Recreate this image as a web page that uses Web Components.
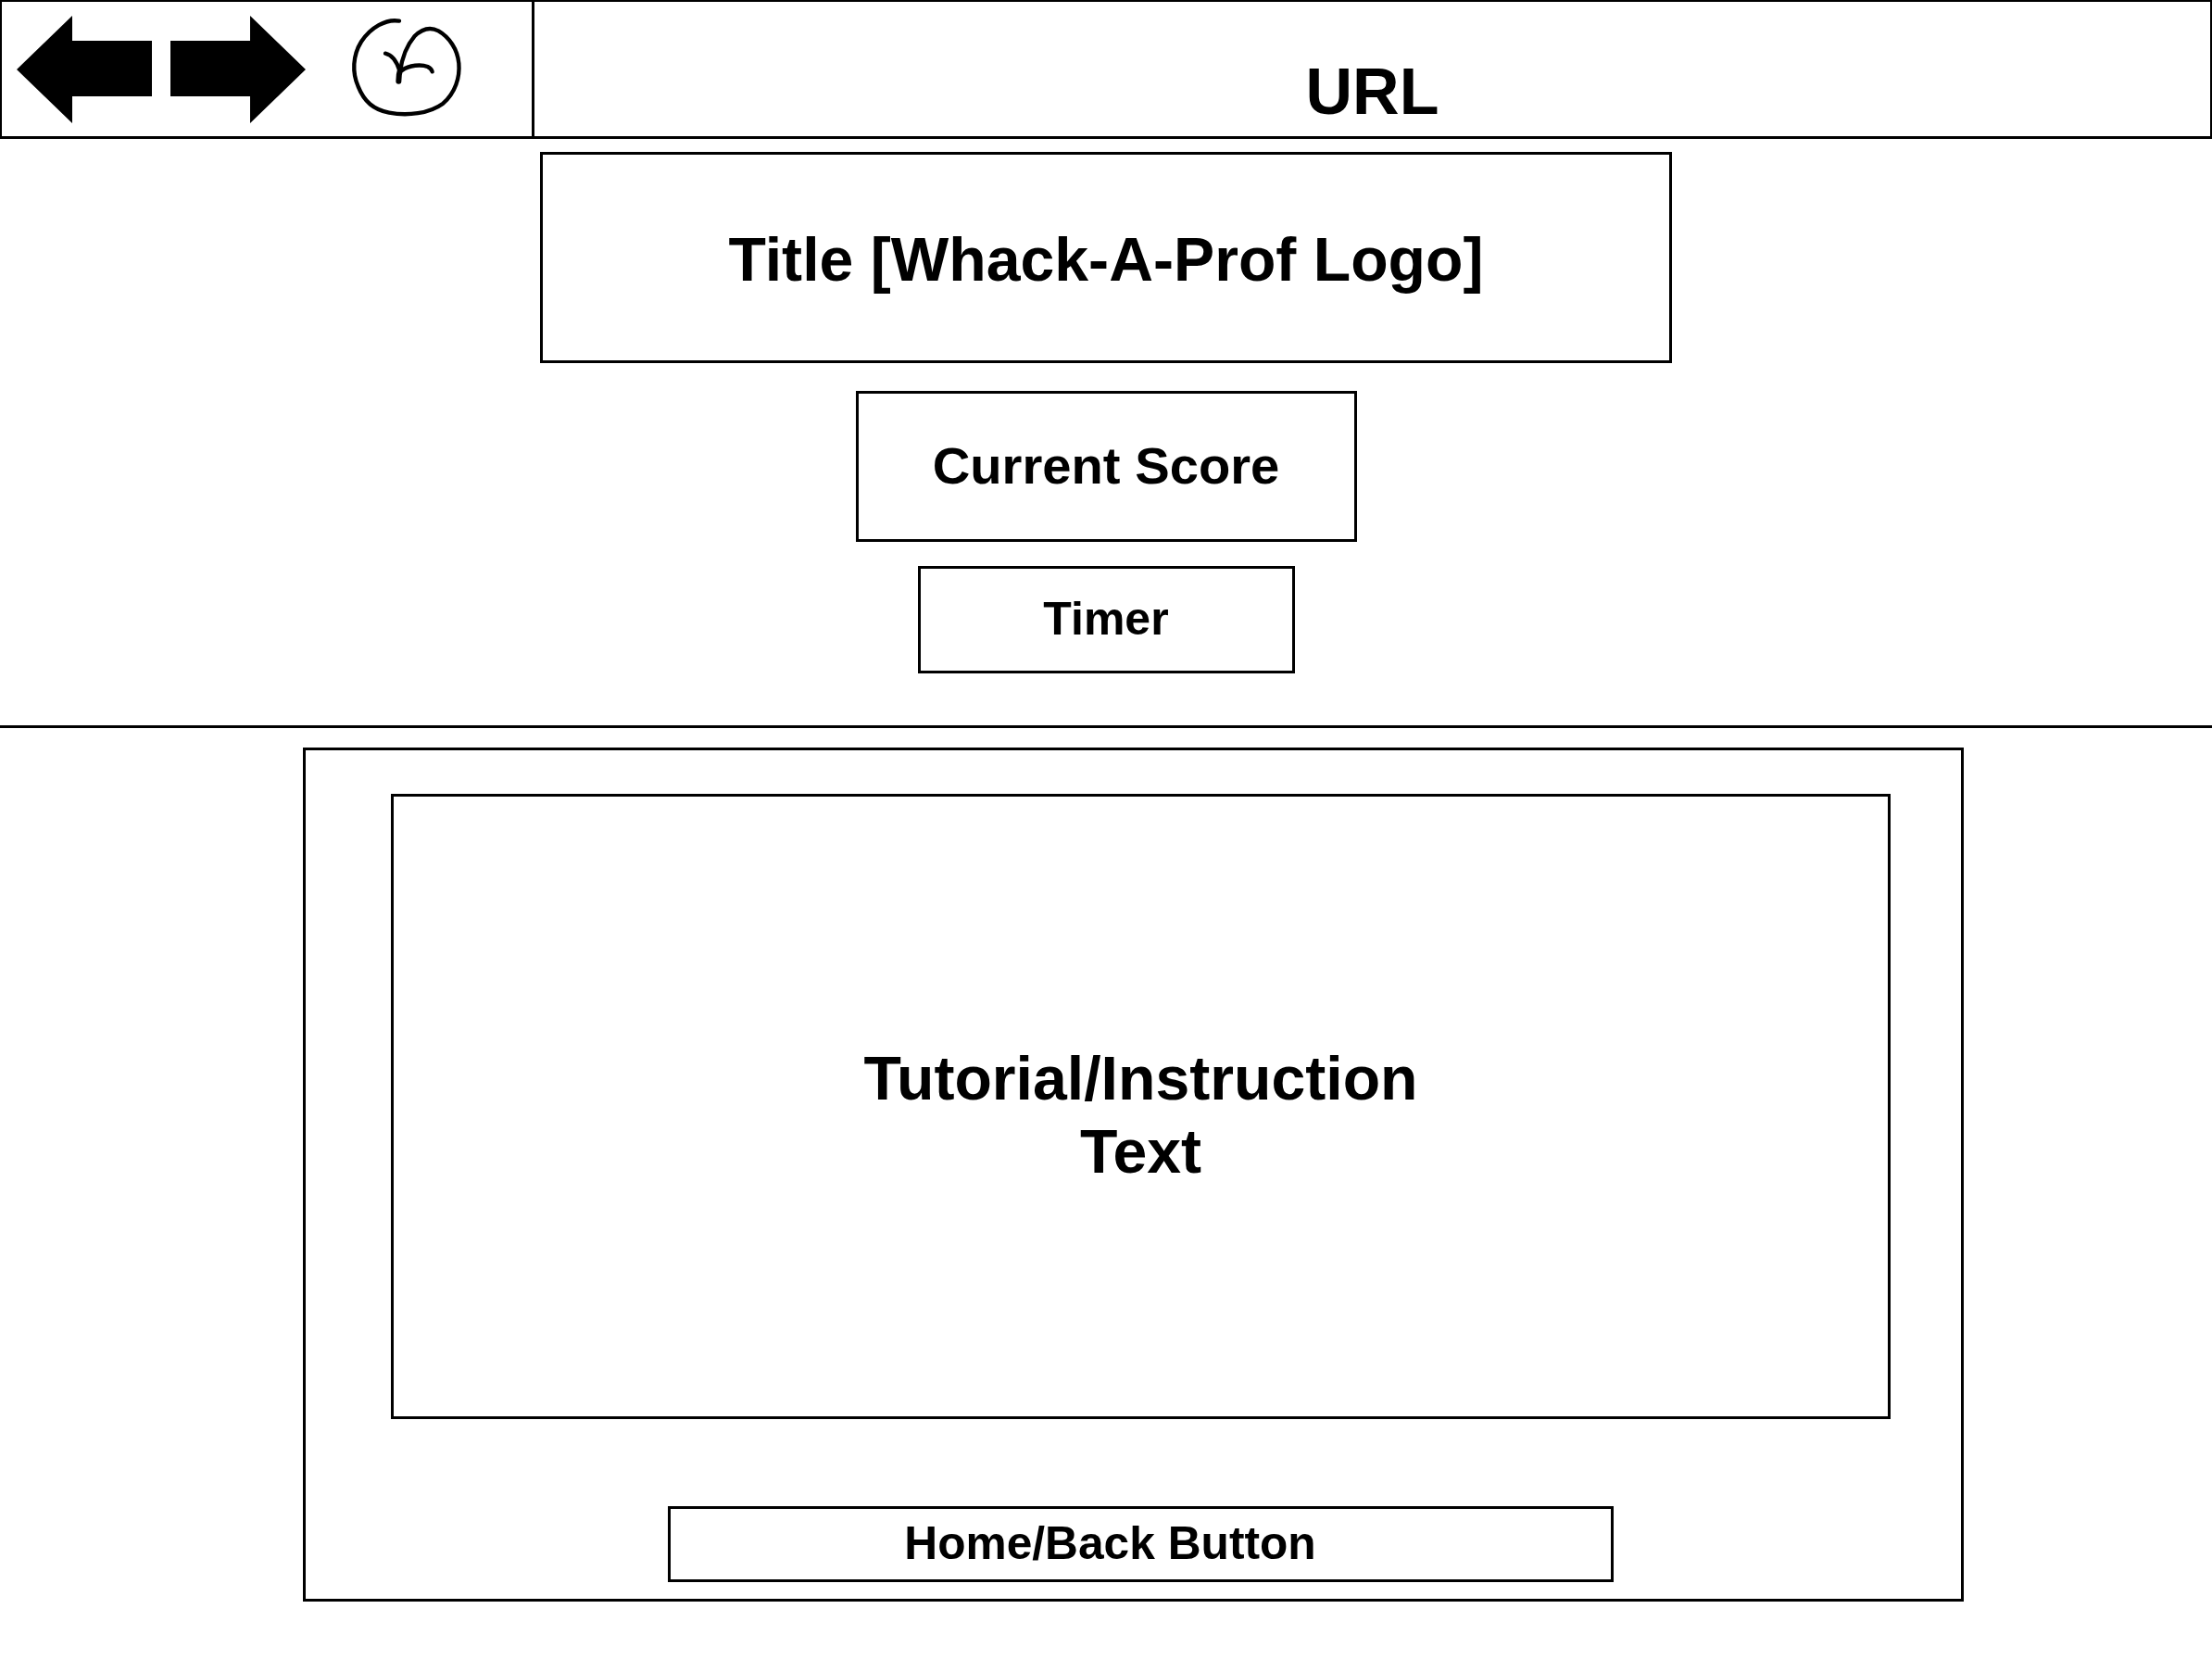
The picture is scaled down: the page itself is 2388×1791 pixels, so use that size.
<!DOCTYPE html>
<html>
<head>
<meta charset="utf-8">
<title>Whack-A-Prof wireframe</title>
<style>
    html, body{
        margin: 0;
        background: #fff;
        color: #000;
        font-family: "Liberation Sans", Arial, sans-serif;
        font-weight: bold;
    }

    wire-page{ width: 2388px; height: 1791px; }

    #title{ width: 1222px; height: 228px; margin-top: 14px; font-size: 66.2px; padding-top: 3px; }
    #score{ width: 541px; height: 163px; margin-top: 30px; font-size: 56.2px; padding-bottom: 2px; }
    #timer{ width: 407px; height: 116px; margin-top: 26px; font-size: 50px; padding-bottom: 2px; }

    #panel{ width: 1793px; height: 922px; margin: 21px 0 0 327px; display: block; }
    #tutorial{ width: 1619px; height: 675px; margin: 47px 0 0 92px; font-size: 66.2px; line-height: 79px; padding-top: 19px; }
    #home{ width: 1021px; height: 82px; margin: 94px 0 0 391px; font-size: 49.7px; padding: 0 66px 2px 0; }
</style>
</head>
<body>

<wire-page>
    <browser-bar>
        <nav-arrow slot="nav"></nav-arrow>
        <nav-arrow slot="nav" dir="right"></nav-arrow>
        <reload-mark slot="nav"></reload-mark>
        URL
    </browser-bar>

    <game-header>
        <wire-box id="title">Title [Whack-A-Prof Logo]</wire-box>
        <wire-box id="score">Current Score</wire-box>
        <wire-box id="timer">Timer</wire-box>
    </game-header>

    <wire-box id="panel">
        <wire-box id="tutorial">Tutorial/Instruction<br>Text</wire-box>
        <wire-box id="home">Home/Back Button</wire-box>
    </wire-box>
</wire-page>

<script>
(function(){

const bar_template = document.createElement('template');
bar_template.innerHTML = `
<style>
    :host{
        display: grid;
        grid-template-columns: 575px 1fr;
        height: 150px;
        box-sizing: border-box;
        border: 2px solid #000;
        border-bottom-width: 3px;
    }

    #nav{
        display: flex;
        align-items: flex-start;
        border-right: 3px solid #000;
        padding: 14px 0 0 16px;
    }

    #url{
        display: flex;
        justify-content: center;
        align-items: flex-end;
        font-size: 70px;
        line-height: 70px;
        padding-bottom: 13px;
    }
</style>

<div id="nav"><slot name="nav"></slot></div>
<div id="url"><slot></slot></div>
`;

customElements.define('browser-bar', class extends HTMLElement {
    constructor()
    {
        super();

        let shadowRoot = this.attachShadow({mode: 'open'});
        shadowRoot.appendChild(bar_template.content.cloneNode(true));
    }
});

const arrow_template = document.createElement('template');
arrow_template.innerHTML = `
<style>
    :host{
        display: block;
        width: 147px;
        height: 118px;
        margin-right: 18px;
    }

    :host([dir=right]) svg{
        transform: scaleX(-1);
    }

    svg{
        display: block;
    }
</style>

<svg width="147" height="118" viewBox="0 0 147 118">
    <path d="M0 59 L60 1 V28 H146 V88 H60 V117 Z" fill="#000"/>
</svg>
`;

customElements.define('nav-arrow', class extends HTMLElement {
    constructor()
    {
        super();

        let shadowRoot = this.attachShadow({mode: 'open'});
        shadowRoot.appendChild(arrow_template.content.cloneNode(true));
    }
});

const reload_template = document.createElement('template');
reload_template.innerHTML = `
<style>
    :host{
        display: block;
        width: 160px;
        height: 140px;
        margin: -16px 0 0 12px;
    }

    svg{
        display: block;
    }
</style>

<!-- hand drawn reload mark, traced at 3x from the sketch -->
<svg width="160" height="140" viewBox="0 0 480 420" fill="none" stroke="#000" stroke-width="13" stroke-linecap="round">
    <path d="M213 68 C170 60 120 90 90 135 C62 180 60 235 80 280 C100 330 130 355 180 365 C240 376 310 368 355 335 C395 300 410 250 406 205 C402 160 375 120 340 100 C310 85 285 95 262 118 C235 150 222 185 216 232"/>
    <path d="M168 173 C190 178 205 200 214 228"/>
    <path d="M222 228 C245 210 285 208 305 216 C313 220 318 226 320 232"/>
    <path d="M217 222 C212 238 211 250 211 263" stroke-width="18"/>
</svg>
`;

customElements.define('reload-mark', class extends HTMLElement {
    constructor()
    {
        super();

        let shadowRoot = this.attachShadow({mode: 'open'});
        shadowRoot.appendChild(reload_template.content.cloneNode(true));
    }
});

const header_template = document.createElement('template');
header_template.innerHTML = `
<style>
    :host{
        display: flex;
        flex-direction: column;
        align-items: center;
        height: 633px;
        border-bottom: 3px solid #000;
    }
</style>

<slot></slot>
`;

customElements.define('game-header', class extends HTMLElement {
    constructor()
    {
        super();

        let shadowRoot = this.attachShadow({mode: 'open'});
        shadowRoot.appendChild(header_template.content.cloneNode(true));
    }
});

const box_template = document.createElement('template');
box_template.innerHTML = `
<style>
    :host{
        display: flex;
        justify-content: center;
        align-items: center;
        text-align: center;
        box-sizing: border-box;
        border: 3px solid #000;
    }
</style>

<slot></slot>
`;

customElements.define('wire-box', class extends HTMLElement {
    constructor()
    {
        super();

        let shadowRoot = this.attachShadow({mode: 'open'});
        shadowRoot.appendChild(box_template.content.cloneNode(true));
    }
});

const page_template = document.createElement('template');
page_template.innerHTML = `
<style>
    :host{
        display: block;
        overflow: hidden;
    }
</style>

<slot></slot>
`;

customElements.define('wire-page', class extends HTMLElement {
    constructor()
    {
        super();

        let shadowRoot = this.attachShadow({mode: 'open'});
        shadowRoot.appendChild(page_template.content.cloneNode(true));
    }
});

})();
</script>
</body>
</html>
